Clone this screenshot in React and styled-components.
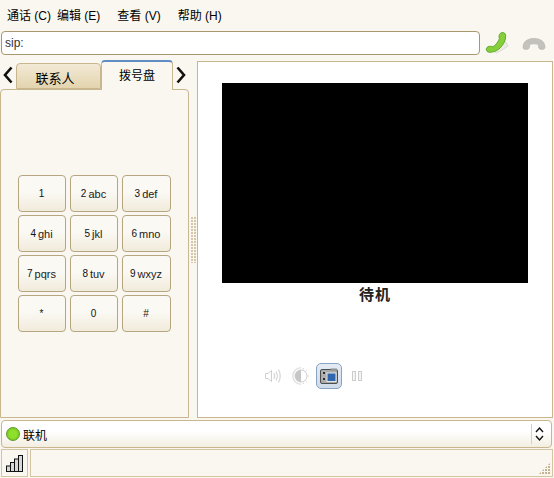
import React from 'react'
import styled, { createGlobalStyle } from 'styled-components'

const Global = createGlobalStyle`
  html, body { margin: 0; padding: 0; background: #faf7f0; }
  body { font-family: "Liberation Sans", "Noto Sans CJK SC", sans-serif; color: #000; }
`

const Win = styled.div`
  width: 554px;
  height: 478px;
  display: flex;
  flex-direction: column;
  background: #faf7f0;
  overflow: hidden;
`

const MenuBar = styled.div`
  height: 28px;
  display: flex;
  align-items: center;
  padding-left: 7px;
  font-size: 12px;
  flex: none;
`

const MenuItem = styled.span`
  margin-right: ${p => p.$gap}px;
  white-space: nowrap;
`

const UriRow = styled.div`
  height: 24px;
  margin-top: 3px;
  padding-left: 1px;
  display: flex;
  align-items: center;
  flex: none;
`

const UriInput = styled.div`
  width: 479px;
  height: 24px;
  flex: none;
  box-sizing: border-box;
  background: #fff;
  border: 1px solid #a8986f;
  border-radius: 4px;
  font-size: 12px;
  line-height: 22px;
  padding-left: 3px;
  color: #333;
`

const CallBtn = styled.div`
  width: ${p => p.$w}px;
  flex: none;
  display: flex;
  justify-content: center;
`

const Main = styled.div`
  flex: none;
  height: 357px;
  margin-top: 6px;
  display: flex;
`

const LeftCol = styled.div`
  width: 189px;
  flex: none;
  display: flex;
  flex-direction: column;
`

const TabBar = styled.div`
  height: 28px;
  flex: none;
  display: flex;
  align-items: flex-end;
  position: relative;
  z-index: 1;
`

const Arrow = styled.div`
  width: 16px;
  height: 24px;
  display: flex;
  align-items: center;
  justify-content: center;
  margin-bottom: 2px;
`

const Tab = styled.div`
  box-sizing: border-box;
  text-align: center;
  border: 1px solid #c8b78e;
  border-bottom: none;
  border-radius: 4px 4px 0 0;
  ${p => p.$active ? `
    width: 72px;
    height: 30px;
    font-size: 12px;
    line-height: 28px;
    background: #faf7f0;
    border-top: 2px solid #5f8dc4;
    margin-bottom: -1px;
  ` : `
    width: 85px;
    height: 26px;
    font-size: 13px;
    line-height: 29px;
    padding-right: 7px;
    background: linear-gradient(#f3ead6, #e3d4ae);
    border-bottom: 1px solid #c8b78e;
  `}
`

const Panel = styled.div`
  flex: 1;
  box-sizing: border-box;
  border: 1px solid #c8b78e;
  border-radius: 4px 4px 0 0;
  background: #faf7f0;
  padding: 85px 0 0 17px;
`

const DialGrid = styled.div`
  display: grid;
  grid-template-columns: 48px 48px 49px;
  grid-auto-rows: 37px;
  column-gap: 4px;
  row-gap: 3px;
`

const DialKey = styled.div`
  box-sizing: border-box;
  border: 1px solid #b5a681;
  border-radius: 4px;
  background: linear-gradient(#fbf9f4 0%, #fbf9f4 45%, #f1ebdb 100%);
  display: flex;
  align-items: center;
  justify-content: center;
  font-size: 10px;
  color: #111;
  gap: 2px;
  padding-right: 1px;
`

const Sub = styled.span`
  font-size: 11px;
  color: #222;
`

const Handle = styled.div`
  width: 8px;
  flex: none;
  display: flex;
  align-items: center;
  justify-content: center;
`

const Grip = styled.div`
  width: 5px;
  height: 46px;
  margin: 0 0 0 1px;
  background-image: radial-gradient(circle at 1px 1px, #d3c8aa 0.8px, transparent 1px);
  background-size: 3px 3px;
`

const Display = styled.div`
  width: 356px;
  flex: none;
  box-sizing: border-box;
  height: 357px;
  border: 1px solid #c8b78e;
  background: #fff;
  padding: 21px 0 0 24px;
`

const Video = styled.div`
  width: 306px;
  height: 200px;
  background: #000;
`

const CallState = styled.div`
  width: 306px;
  text-align: center;
  font-size: 15px;
  font-weight: bold;
  line-height: 24px;
  letter-spacing: 1px;
  color: #222;
`

const Tools = styled.div`
  margin: 56px 0 0 38px;
  display: flex;
  align-items: center;
  gap: 2px;
`

const ToolBtn = styled.div`
  width: 26px;
  height: 26px;
  box-sizing: border-box;
  display: flex;
  align-items: center;
  justify-content: center;
  ${p => p.$on && `
    border: 1px solid #8aa3c0;
    border-radius: 5px;
    background: linear-gradient(#e4ebf4, #cfdbea);
  `}
`

const Combo = styled.div`
  flex: none;
  margin: 2px 2px 0 1px;
  height: 28px;
  box-sizing: border-box;
  border: 1px solid #c8b78e;
  border-radius: 4px;
  background: linear-gradient(#fff 0%, #fff 40%, #f3eee0 100%);
  display: flex;
  align-items: center;
  padding-left: 4px;
  font-size: 12px;
`

const Dot = styled.span`
  width: 14px;
  height: 14px;
  border-radius: 50%;
  background: radial-gradient(circle at 50% 50%, #8fe02c 40%, #68b81c 100%);
  border: 1px solid #5f9a2a;
  margin-right: 3px;
  box-sizing: border-box;
`

const ComboLabel = styled.span`
  flex: 1;
`

const ComboArrow = styled.div`
  width: 20px;
  height: 20px;
  box-sizing: border-box;
  padding-right: 4px;
  border-left: 1px solid #d9d0b8;
  display: flex;
  align-items: center;
  justify-content: center;
`

const StatusBar = styled.div`
  flex: none;
  height: 28px;
  margin: 1px 1px 0 1px;
  display: flex;
  gap: 2px;
`

const Signal = styled.div`
  width: 27px;
  box-sizing: border-box;
  border: 1px solid #d3c5a2;
  display: flex;
  align-items: center;
  justify-content: center;
`

const Status = styled.div`
  flex: 1;
  box-sizing: border-box;
  border: 1px solid #d3c5a2;
  position: relative;
`

const ResizeGrip = styled.div`
  position: absolute;
  right: 2px;
  bottom: 2px;
  width: 11px;
  height: 11px;
  background-image: radial-gradient(circle at 1px 1px, #c3b48f 0.8px, transparent 1px);
  background-size: 3px 3px;
  clip-path: polygon(100% 0, 100% 100%, 0 100%);
`

const keys = [
  ['1', ''], ['2', 'abc'], ['3', 'def'],
  ['4', 'ghi'], ['5', 'jkl'], ['6', 'mno'],
  ['7', 'pqrs'], ['8', 'tuv'], ['9', 'wxyz'],
  ['*', ''], ['0', ''], ['#', ''],
]

const Chevron = ({ left }) => (
  <svg width="10" height="18" viewBox="0 0 10 18">
    <path d={left ? 'M8.5 1.5 L2 9 L8.5 16.5' : 'M1.5 1.5 L8 9 L1.5 16.5'} fill="none" stroke="#111" strokeWidth="2.6" />
  </svg>
)

const GreenPhone = () => (
  <svg width="24" height="24" viewBox="0 0 24 24">
    <path d="M15 13 L20 10 L23 15 L17 19 L11 22 L9 20 Z" fill="#eeece5" stroke="#d2d0c8" strokeWidth="0.7" />
    <path d="M15.5 2.2 C17.5 0.8 20 1.6 20.6 3.8 C21.4 9 17.4 16.6 11.5 19.6 C8.5 21.2 3.6 22.2 2 20.2 C0.8 18.6 1.2 16.6 3 15.8 C4.6 15 6.6 15.2 7.8 15.8 C10.6 14.4 13.6 10.4 14.4 7.4 C13.6 5.8 14 3.4 15.5 2.2 Z" fill="#86cf3a" stroke="#55a420" strokeWidth="0.9" />
  </svg>
)

const GreyPhone = () => (
  <svg width="24" height="16" viewBox="0 0 24 16">
    <path d="M1 12.5 C1 6 6 3.5 12 3.5 C18 3.5 23 6 23 12.5 C23 14 21.5 14.6 19.5 14.4 C17.6 14.2 16.5 13.4 16.6 12 L16.4 9.6 C14 8.6 10 8.6 7.6 9.6 L7.4 12 C7.5 13.4 6.4 14.2 4.5 14.4 C2.5 14.6 1 14 1 12.5 Z" fill="#c4c2bc" stroke="#b5b3ad" strokeWidth="0.6" />
  </svg>
)

const Speaker = () => (
  <svg width="18" height="16" viewBox="0 0 18 16" fill="none" stroke="#cfcfcf" strokeWidth="1">
    <path d="M1.5 5.5 H4 L7.5 2.5 V13.5 L4 10.5 H1.5 Z" />
    <path d="M10 5 Q11.5 8 10 11 M12.3 3.5 Q14.6 8 12.3 12.5 M14.6 1.5 Q17.8 8 14.6 14.5" />
  </svg>
)

const Contrast = () => (
  <svg width="18" height="18" viewBox="0 0 18 18">
    <circle cx="9" cy="9" r="6" fill="#fff" stroke="#d0d0d0" />
    <path d="M9 3 A6 6 0 0 0 9 15 Z" fill="#c6c6c6" />
    <path d="M9 0.8 A8.2 8.2 0 0 0 9 17.2" fill="none" stroke="#e2e2e2" strokeWidth="1.5" />
    <path d="M14.6 3.2 L13.4 4.4 M17 9 H15.4 M14.6 14.8 L13.4 13.6 M11.5 1 L11 2.5 M11.5 17 L11 15.5" stroke="#d4d4d4" />
  </svg>
)

const Camera = () => (
  <svg width="18" height="16" viewBox="0 0 18 16">
    <rect x="0.5" y="1.5" width="17" height="14" rx="1.5" fill="#a9abaa" stroke="#4d4f4f" />
    <rect x="10.5" y="0.5" width="6.5" height="2" fill="#8d8f8e" />
    <rect x="7" y="5" width="9" height="8.5" fill="#2f66ad" stroke="#e4e8ec" />
    <circle cx="4" cy="5" r="1.8" fill="#2c2c2c" stroke="#e4e4e4" strokeWidth="0.7" />
    <circle cx="4" cy="11" r="1.8" fill="#2c2c2c" stroke="#e4e4e4" strokeWidth="0.7" />
  </svg>
)

const Pause = () => (
  <svg width="12" height="12" viewBox="0 0 12 12" fill="#f4f4f4" stroke="#cdcdcd">
    <rect x="1.5" y="1.5" width="3" height="9" />
    <rect x="7.5" y="1.5" width="3" height="9" />
  </svg>
)

const UpDown = () => (
  <svg width="9" height="16" viewBox="0 0 9 16" fill="none" stroke="#111" strokeWidth="1.4">
    <path d="M1 6 L4.5 2 L8 6 M1 10 L4.5 14 L8 10" />
  </svg>
)

const Bars = () => (
  <svg width="18" height="17" viewBox="0 0 18 17">
    {[[0.5, 11, 5.5], [4.5, 7.5, 9], [8.5, 4, 12.5], [12.5, 0.5, 16]].map(([x, y, h]) => (
      <rect key={x} x={x} y={y} width="4" height={h} fill="#d8d8d8" stroke="#111" />
    ))}
  </svg>
)

export default function App() {
  return (
    <Win>
      <Global />
      <MenuBar>
        <MenuItem $gap={6}>通话 (C)</MenuItem>
        <MenuItem $gap={17}>编辑 (E)</MenuItem>
        <MenuItem $gap={17}>查看 (V)</MenuItem>
        <MenuItem $gap={0}>帮助 (H)</MenuItem>
      </MenuBar>
      <UriRow>
        <UriInput>sip:</UriInput>
        <CallBtn $w={34}><GreenPhone /></CallBtn>
        <CallBtn $w={40}><GreyPhone /></CallBtn>
      </UriRow>
      <Main>
        <LeftCol>
          <TabBar>
            <Arrow><Chevron left /></Arrow>
            <Tab>联系人</Tab>
            <Tab $active>拨号盘</Tab>
            <Arrow><Chevron /></Arrow>
          </TabBar>
          <Panel>
            <DialGrid>
              {keys.map(([n, s]) => (
                <DialKey key={n}>{n}{s && <Sub>{s}</Sub>}</DialKey>
              ))}
            </DialGrid>
          </Panel>
        </LeftCol>
        <Handle><Grip /></Handle>
        <Display>
          <Video />
          <CallState>待机</CallState>
          <Tools>
            <ToolBtn><Speaker /></ToolBtn>
            <ToolBtn><Contrast /></ToolBtn>
            <ToolBtn $on><Camera /></ToolBtn>
            <ToolBtn><Pause /></ToolBtn>
          </Tools>
        </Display>
      </Main>
      <Combo>
        <Dot />
        <ComboLabel>联机</ComboLabel>
        <ComboArrow><UpDown /></ComboArrow>
      </Combo>
      <StatusBar>
        <Signal><Bars /></Signal>
        <Status><ResizeGrip /></Status>
      </StatusBar>
    </Win>
  )
}
